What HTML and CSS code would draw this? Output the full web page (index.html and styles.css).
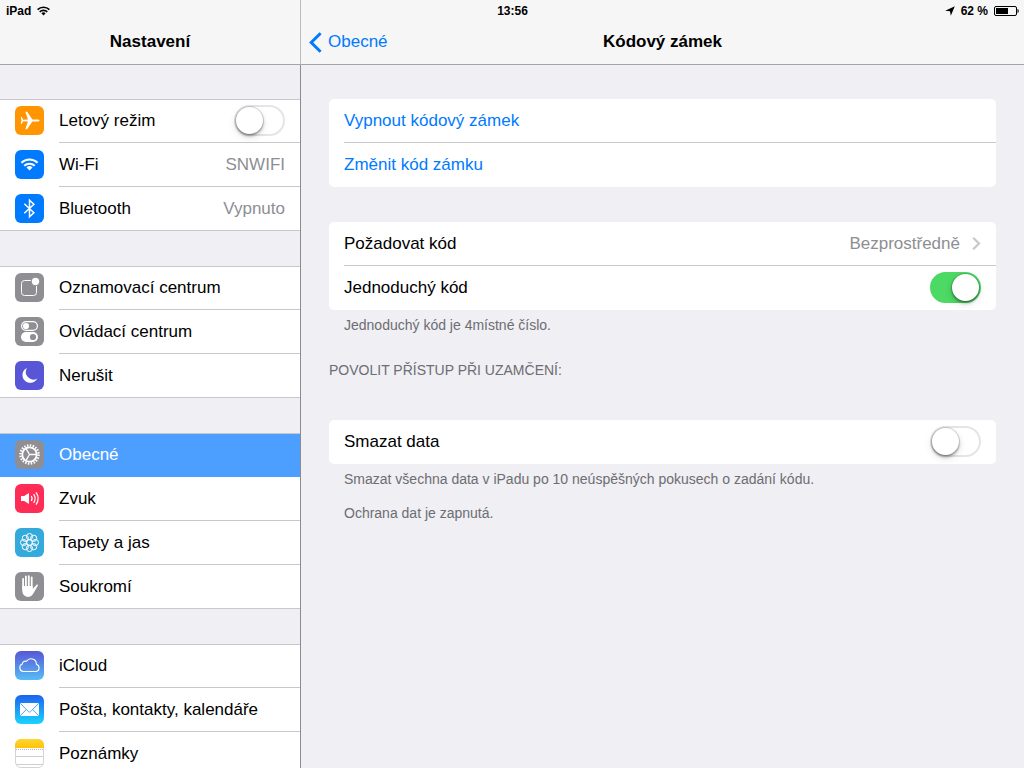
FILE: index.html
```
<!DOCTYPE html>
<html lang="cs">
<head>
  <meta charset="UTF-8" />
  <meta name="viewport" content="width=device-width, initial-scale=1.0"/>
  <title>Nastavení</title>
  <link rel="stylesheet" href="styles.css">
</head>
<body>
  <div class="status-bar">
    <div class="status-left">
      <span>iPad</span>
      <svg width="13" height="10" viewBox="0 0 13 10" fill="none" stroke="#000" stroke-width="1.6">
        <path d="M0.6 3.6a8.4 8.4 0 0 1 11.8 0M2.7 5.9a5.4 5.4 0 0 1 7.6 0"/>
        <path d="M6.5 9.4L4.4 7.2a3 3 0 0 1 4.2 0z" fill="#000" stroke="none"/>
      </svg>
    </div>
    <div class="status-time">13:56</div>
    <div class="status-right">
      <svg width="10" height="10" viewBox="0 0 10 10"><path d="M9.8 0.2L5.8 9.8L5 5.2L0.2 4.8z"/></svg>
      <span>62 %</span>
      <svg width="25" height="10" viewBox="0 0 25 10">
        <rect x="0.5" y="0.5" width="22" height="9" rx="1.5" fill="none" stroke="#000"/>
        <rect x="2" y="2" width="12" height="6"/>
        <path d="M23.5 3c1 .4 1.2 1 1.2 2s-.2 1.6-1.2 2z"/>
      </svg>
    </div>
  </div>

  <div class="split">
    <nav class="sidebar">
      <header class="bar"><h1>Nastavení</h1></header>
      <div class="scroll">
        <ul class="group">
          <li>
            <label class="row">
              <svg class="icon" viewBox="0 0 29 29">
                <rect width="29" height="29" rx="6" fill="#ff9500"/>
                <path fill="#fff" d="M24.6 14.5c0 .7-1 1.1-2.3 1.1h-4.9l-5.3 7.6h-1.7l2.5-7.6-4.6-.3-1.7 2.6H5.8l.6-3.4-.6-3.4h.8l1.7 2.6 4.6-.3-2.5-7.6h1.7l5.3 7.6h4.9c1.3 0 2.3.4 2.3 1.1z"/>
              </svg>
              <span class="body"><span class="name">Letový režim</span><input type="checkbox" class="switch"></span>
            </label>
          </li>
          <li>
            <a class="row" href="#wifi">
              <svg class="icon" viewBox="0 0 29 29">
                <rect width="29" height="29" rx="6" fill="#007aff"/>
                <path fill="none" stroke="#fff" stroke-width="2" d="M6.4 12.7a11.6 11.6 0 0 1 16.2 0M9.3 15.7a7.6 7.6 0 0 1 10.4 0"/>
                <path fill="#fff" d="M14.5 20.5l-3-3a4.3 4.3 0 0 1 6 0z"/>
              </svg>
              <span class="body"><span class="name">Wi-Fi</span><span class="value">SNWIFI</span></span>
            </a>
          </li>
          <li>
            <a class="row" href="#bluetooth">
              <svg class="icon" viewBox="0 0 29 29">
                <rect width="29" height="29" rx="6" fill="#007aff"/>
                <path fill="none" stroke="#fff" stroke-width="1.5" d="M9.3 9.8l9.6 9-4.4 4.1V6.1l4.4 4.1-9.6 9"/>
              </svg>
              <span class="body"><span class="name">Bluetooth</span><span class="value">Vypnuto</span></span>
            </a>
          </li>
        </ul>

        <ul class="group">
          <li>
            <a class="row" href="#notifications">
              <svg class="icon" viewBox="0 0 29 29">
                <rect width="29" height="29" rx="6" fill="#8e8e93"/>
                <rect x="6.5" y="7.5" width="15" height="15" rx="3" fill="none" stroke="#fff"/>
                <circle cx="20.5" cy="8.5" r="4.2" fill="#fff" stroke="#8e8e93"/>
              </svg>
              <span class="body"><span class="name">Oznamovací centrum</span></span>
            </a>
          </li>
          <li>
            <a class="row" href="#control">
              <svg class="icon" viewBox="0 0 29 29">
                <rect width="29" height="29" rx="6" fill="#8e8e93"/>
                <rect x="6.6" y="4.6" width="15.8" height="8.8" rx="4.4" fill="none" stroke="#fff" stroke-width="1.2"/>
                <circle cx="11" cy="9" r="3.1" fill="#fff"/>
                <rect x="6" y="15" width="17" height="10" rx="5" fill="#fff"/>
                <circle cx="18" cy="20" r="3.1" fill="#8e8e93"/>
              </svg>
              <span class="body"><span class="name">Ovládací centrum</span></span>
            </a>
          </li>
          <li>
            <a class="row" href="#dnd">
              <svg class="icon" viewBox="0 0 29 29">
                <rect width="29" height="29" rx="6" fill="#5856d6"/>
                <path fill="#fff" d="M11.9 7A7.8 7.8 0 1 0 22.3 17.4 7.6 7.6 0 0 1 11.9 7z"/>
              </svg>
              <span class="body"><span class="name">Nerušit</span></span>
            </a>
          </li>
        </ul>

        <ul class="group">
          <li>
            <a class="row selected" href="#general">
              <svg class="icon" viewBox="0 0 29 29">
                <rect width="29" height="29" rx="6" fill="#8e8e93"/>
                <circle cx="14.5" cy="14.5" r="9.1" fill="none" stroke="#fff" stroke-width="2.4" stroke-dasharray="1.5 1.36"/>
                <circle cx="14.5" cy="14.5" r="7.2" fill="none" stroke="#fff" stroke-width="1.8"/>
                <path stroke="#fff" stroke-width="1.3" d="M14.5 14.5H21M14.5 14.5L11.2 8.8M14.5 14.5L11.2 20.2"/>
              </svg>
              <span class="body"><span class="name">Obecné</span></span>
            </a>
          </li>
          <li>
            <a class="row" href="#sound">
              <svg class="icon" viewBox="0 0 29 29">
                <rect width="29" height="29" rx="6" fill="#ff2d55"/>
                <path fill="#fff" d="M6 12h3.2l4.8-3v11l-4.8-3H6z"/>
                <path fill="none" stroke="#fff" stroke-width="1.2" d="M16.3 12a4.4 4.4 0 0 1 0 5M18.6 10.2a7.2 7.2 0 0 1 0 8.6M21 8.4a10.4 10.4 0 0 1 0 12.2"/>
              </svg>
              <span class="body"><span class="name">Zvuk</span></span>
            </a>
          </li>
          <li>
            <a class="row" href="#wallpaper">
              <svg class="icon" viewBox="0 0 29 29">
                <rect width="29" height="29" rx="6" fill="#34aadc"/>
                <g fill="none" stroke="#fff" stroke-width="1">
                  <circle cx="14.5" cy="14.5" r="2.8"/>
                  <circle cx="14.5" cy="8.6" r="3.1"/>
                  <circle cx="18.7" cy="10.3" r="3.1"/>
                  <circle cx="20.4" cy="14.5" r="3.1"/>
                  <circle cx="18.7" cy="18.7" r="3.1"/>
                  <circle cx="14.5" cy="20.4" r="3.1"/>
                  <circle cx="10.3" cy="18.7" r="3.1"/>
                  <circle cx="8.6" cy="14.5" r="3.1"/>
                  <circle cx="10.3" cy="10.3" r="3.1"/>
                </g>
              </svg>
              <span class="body"><span class="name">Tapety a jas</span></span>
            </a>
          </li>
          <li>
            <a class="row" href="#privacy">
              <svg class="icon" viewBox="0 0 29 29">
                <rect width="29" height="29" rx="6" fill="#8e8e93"/>
                <path fill="none" stroke="#fff" stroke-width="1.8" stroke-linecap="round" d="M8.1 7v9M10.9 4.5v11M13.8 4.1v11M16.7 5.3v11"/>
                <path fill="#fff" d="M7.2 14h10.4v3l3.8-4.1c.8-.7 2-.2 1.4.9l-4.2 7.2c-1.2 2.3-2.5 3.9-5.3 3.9-4.3 0-6.1-3.1-6.1-7.3z"/>
              </svg>
              <span class="body"><span class="name">Soukromí</span></span>
            </a>
          </li>
        </ul>

        <ul class="group">
          <li>
            <a class="row" href="#icloud">
              <svg class="icon" viewBox="0 0 29 29">
                <defs>
                  <linearGradient id="cloudFill" x1="0" y1="0" x2="0" y2="1">
                    <stop offset="0" stop-color="#5856d6"/><stop offset="1" stop-color="#56bdf6"/>
                  </linearGradient>
                </defs>
                <rect width="29" height="29" rx="6" fill="url(#cloudFill)"/>
                <path fill="none" stroke="#fff" stroke-width="1.1" d="M8.2 20.5a3.9 3.9 0 0 1-.9-7.5 3.2 3.2 0 0 1 4.3-2.7 5.3 5.3 0 0 1 9.8 2.9 3.8 3.8 0 0 1-.2 7.3z"/>
              </svg>
              <span class="body"><span class="name">iCloud</span></span>
            </a>
          </li>
          <li>
            <a class="row" href="#mail">
              <svg class="icon" viewBox="0 0 29 29">
                <defs>
                  <linearGradient id="mailFill" x1="0" y1="0" x2="0" y2="1">
                    <stop offset="0" stop-color="#1d62f0"/><stop offset="1" stop-color="#19d5fd"/>
                  </linearGradient>
                </defs>
                <rect width="29" height="29" rx="6" fill="url(#mailFill)"/>
                <rect x="5" y="8" width="19" height="13" rx="1" fill="#fff"/>
                <path fill="none" stroke="#3d9df5" stroke-width=".9" d="M5.3 8.3l8 8.2c.8.8 1.6.8 2.4 0l8-8.2M5.3 20.7l6-6.2M23.7 20.7l-6-6.2"/>
              </svg>
              <span class="body"><span class="name">Pošta, kontakty, kalendáře</span></span>
            </a>
          </li>
          <li>
            <a class="row" href="#notes">
              <svg class="icon" viewBox="0 0 29 29">
                <defs>
                  <linearGradient id="notesFill" x1="0" y1="0" x2="0" y2="1">
                    <stop offset="0" stop-color="#ffd52e"/><stop offset="1" stop-color="#fec30a"/>
                  </linearGradient>
                </defs>
                <rect x=".5" y=".5" width="28" height="28" rx="5.5" fill="#fff" stroke="#d4d4d4"/>
                <path fill="url(#notesFill)" d="M0 9V6a6 6 0 0 1 6-6h17a6 6 0 0 1 6 6v3z"/>
                <path stroke="#b5b5b5" stroke-dasharray="1 1" d="M1 10.5h27"/>
                <path stroke="#cfcfcf" d="M1 17.5h27M1 25.5h27"/>
              </svg>
              <span class="body"><span class="name">Poznámky</span></span>
            </a>
          </li>
        </ul>
      </div>
    </nav>

    <main class="detail">
      <header class="bar">
        <a class="back" href="#general">
          <svg width="13" height="21" viewBox="0 0 13 21"><path d="M11.6 1.2L2.2 10.5l9.4 9.3" fill="none" stroke="#007aff" stroke-width="3"/></svg>
          Obecné
        </a>
        <h2>Kódový zámek</h2>
      </header>
      <div class="content">
        <div class="card">
          <button class="line link">Vypnout kódový zámek</button>
          <button class="line link">Změnit kód zámku</button>
        </div>

        <div class="card">
          <a class="line" href="#require">
            <span class="name">Požadovat kód</span>
            <span class="value">Bezprostředně</span>
            <svg class="chevron" width="9" height="13" viewBox="0 0 9 13"><path d="M1.2 0.8L7 6.5l-5.8 5.7" fill="none" stroke="#c7c7cc" stroke-width="2.2"/></svg>
          </a>
          <label class="line"><span class="name">Jednoduchý kód</span><input type="checkbox" class="switch" checked></label>
        </div>
        <p class="note">Jednoduchý kód je 4místné číslo.</p>

        <h3>POVOLIT PŘÍSTUP PŘI UZAMČENÍ:</h3>

        <div class="card">
          <label class="line"><span class="name">Smazat data</span><input type="checkbox" class="switch"></label>
        </div>
        <p class="note">Smazat všechna data v iPadu po 10 neúspěšných pokusech o zadání kódu.</p>
        <p class="note">Ochrana dat je zapnutá.</p>
      </div>
    </main>
  </div>
</body>
</html>
```
FILE: styles.css
```
* {
  box-sizing: border-box;
}

body {
  margin: 0;
  font-family: "Liberation Sans", Arial, sans-serif;
  font-size: 17px;
  line-height: 20px;
  color: #000;
  background: #efeff4;
}

a {
  color: inherit;
  text-decoration: none;
}

h1, h2, h3, p, ul {
  margin: 0;
  padding: 0;
}

/* status bar lies over both headers */
.status-bar {
  position: absolute;
  top: 0;
  left: 0;
  right: 0;
  display: grid;
  grid-template-columns: 1fr auto 1fr;
  align-items: center;
  height: 21px;
  padding: 0 5px 0 6px;
  font-size: 12px;
  font-weight: bold;
}

.status-left,
.status-right {
  display: flex;
  align-items: center;
  gap: 6px;
}

.status-right {
  justify-content: flex-end;
}

.split {
  display: grid;
  grid-template-columns: 301px 1fr;
  height: 100vh;
}

.sidebar,
.detail {
  display: flex;
  flex-direction: column;
  min-height: 0;
}

.bar {
  flex: none;
  height: 65px;
  padding-top: 20px;
  background: #f6f6f6;
  border-bottom: 1px solid #a3a3aa;
}

.bar h1,
.bar h2 {
  font-size: 17px;
  line-height: 44px;
  text-align: center;
}

.sidebar .bar {
  border-right: 1px solid #bcbcc0;
}

.scroll {
  flex: 1;
  overflow-y: auto;
  scrollbar-width: none;
  padding-top: 34px;
  border-right: 1px solid #8a8a90;
}

.group {
  list-style: none;
  margin-bottom: 35px;
  background: #fff;
  box-shadow: inset 0 1px #c8c7cc, inset 0 -1px #c8c7cc;
}

.row {
  display: flex;
  height: 44px;
  padding-left: 15px;
  gap: 15px;
}

.icon {
  flex: none;
  width: 29px;
  height: 29px;
  margin-top: 7px;
}

.body {
  flex: 1;
  display: flex;
  align-items: center;
  padding-right: 15px;
  border-bottom: 1px solid #c8c7cc;
}

.group li:last-child .body,
.selected .body {
  border-color: transparent;
}

.selected {
  color: #fff;
  background: #4c9fff;
  box-shadow: inset 0 1px #c8c7cc;
}

.name {
  flex: 1;
}

.value {
  color: #8e8e93;
}

.switch {
  appearance: none;
  flex: none;
  width: 51px;
  height: 31px;
  margin: 0;
  padding: 0;
  border: 2px solid #e5e5e5;
  border-radius: 16px;
  background: #fff;
}

.switch::before {
  content: "";
  display: block;
  width: 27px;
  height: 27px;
  border-radius: 50%;
  background: #fff;
  box-shadow: 0 0 0 1px rgba(0, 0, 0, 0.12), 0 2px 3px rgba(0, 0, 0, 0.35), 0 3px 8px rgba(0, 0, 0, 0.12);
}

.switch:checked {
  background: #4cd964;
  border-color: #4cd964;
}

.switch:checked::before {
  margin-left: 20px;
}

.detail .bar {
  display: grid;
  grid-template-columns: 1fr auto 1fr;
  align-items: center;
}

.back {
  display: flex;
  align-items: center;
  gap: 6px;
  padding-left: 8px;
  color: #007aff;
}

.content {
  flex: 1;
  overflow-y: auto;
  padding: 34px 28px;
}

.card {
  margin-bottom: 35px;
  padding-left: 15px;
  border-radius: 5px;
  background: #fff;
}

.line {
  display: flex;
  align-items: center;
  width: 100%;
  height: 44px;
  padding: 0 15px 0 0;
  border: 0;
  border-bottom: 1px solid #c8c7cc;
  background: none;
  font: inherit;
  text-align: left;
}

.line:last-child {
  border-color: transparent;
}

.link {
  color: #007aff;
}

.chevron {
  margin-left: 12px;
}

.note,
.content h3 {
  font-size: 14px;
  font-weight: normal;
  line-height: 20px;
  color: #6d6d72;
}

.note {
  margin: 0 15px 14px;
}

.card + .note {
  margin-top: -30px;
}

.content h3 {
  margin: 25px 0 40px;
}
```
